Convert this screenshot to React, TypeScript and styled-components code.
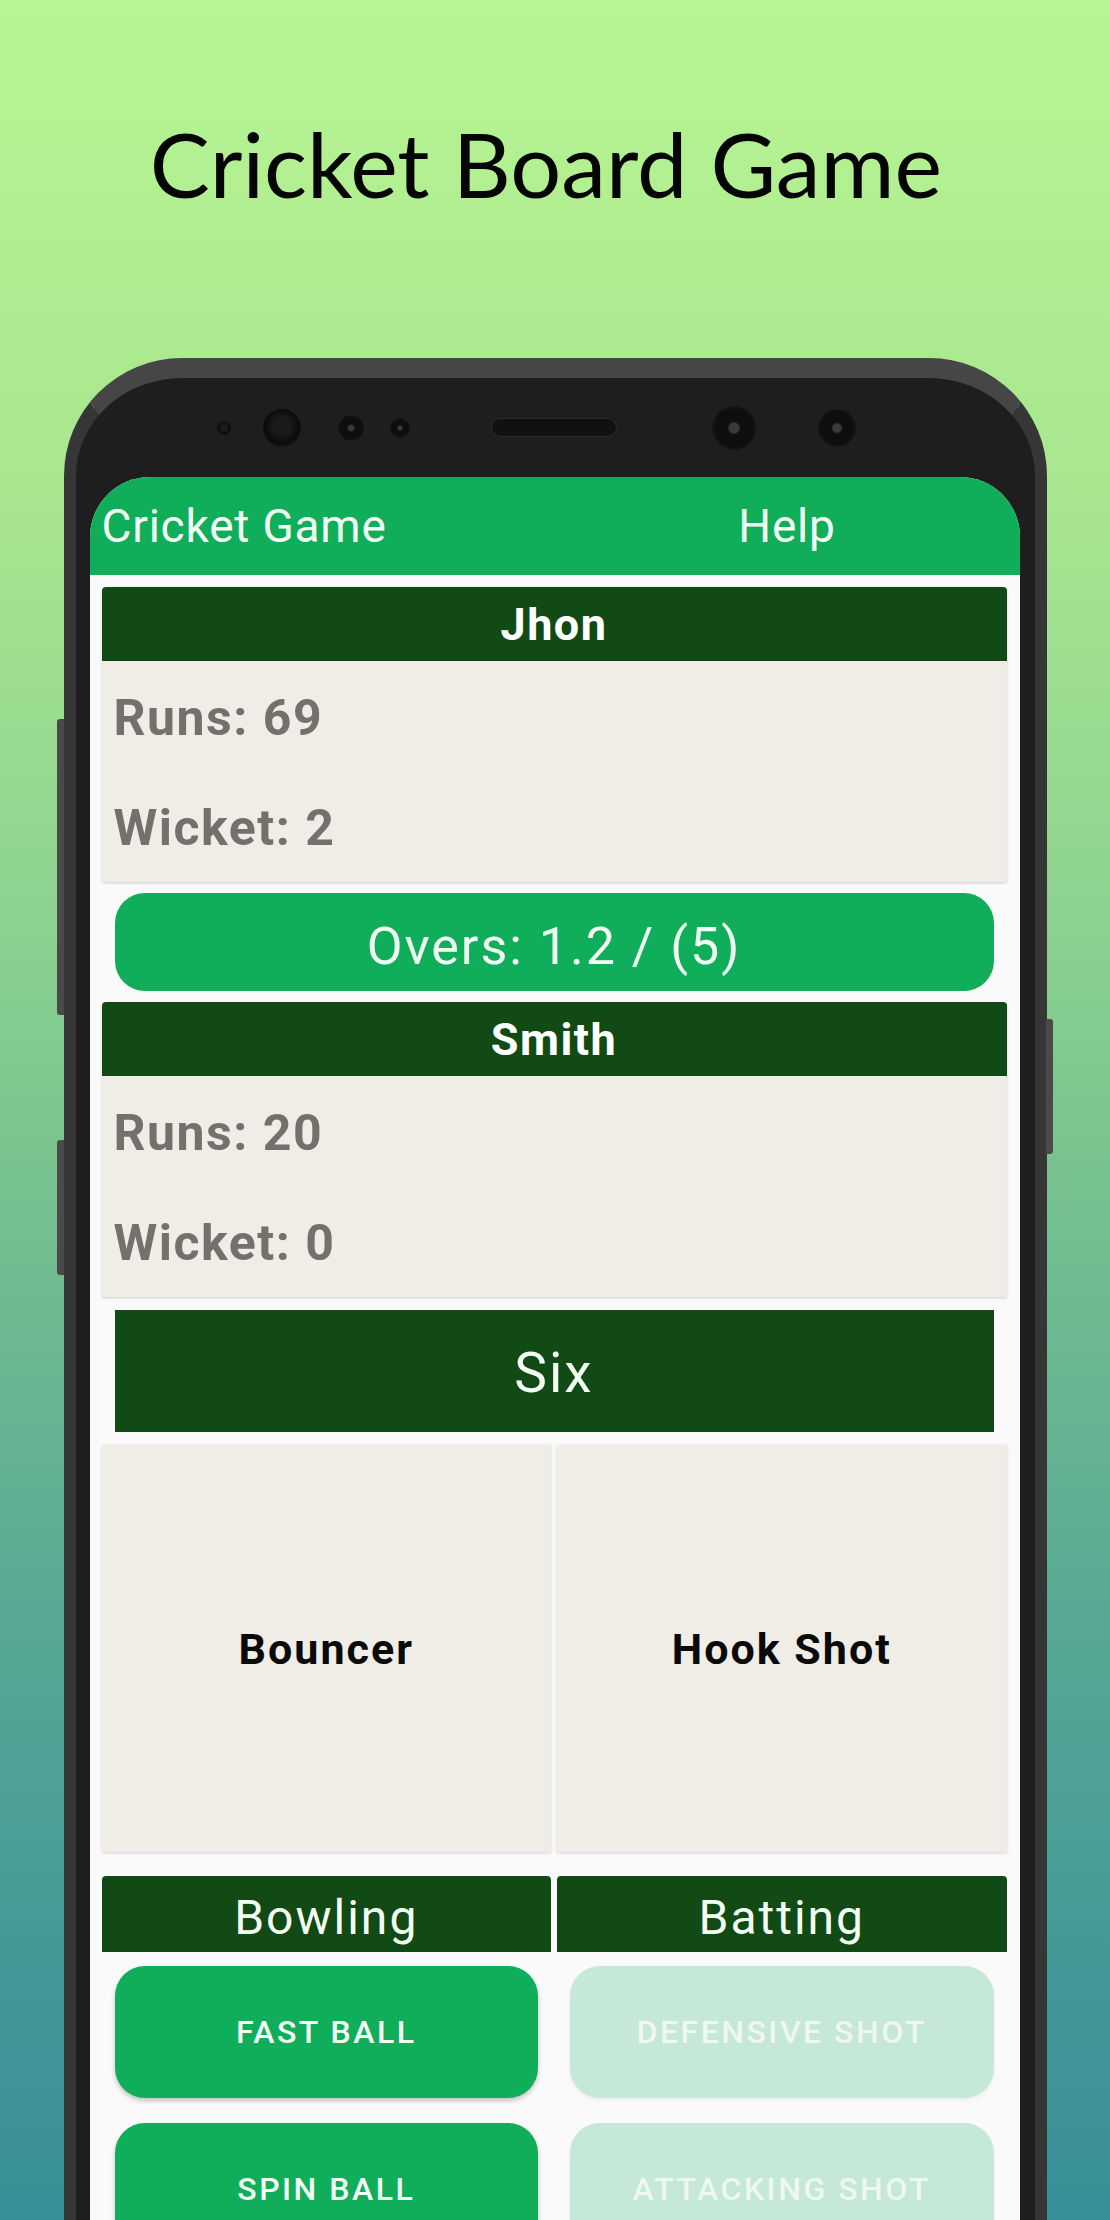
import React from "react";
import styled, { createGlobalStyle } from "styled-components";

const GlobalStyle = createGlobalStyle`
  html, body { margin: 0; padding: 0; }
  body {
    width: 1110px;
    height: 2220px;
    overflow: hidden;
    font-family: Roboto, "Noto Sans", Arial, sans-serif;
  }
  #root { height: 2220px; }
`;

const Page = styled.div`
  height: 2220px;
  overflow: hidden;
  display: flex;
  flex-direction: column;
  align-items: center;
  background: linear-gradient(
    180deg,
    #b7f592 0%,
    #a8e690 22%,
    #8ed38f 40%,
    #6fbb90 58%,
    #55a794 74%,
    #449a96 87%,
    #398f98 100%
  );
`;

const Title = styled.h1`
  margin: 118px 18px 0 0;
  font-family: Lato, "Open Sans", sans-serif;
  font-weight: 400;
  font-size: 90px;
  line-height: 90px;
  color: #050505;
`;

const Phone = styled.div`
  position: relative;
  box-sizing: border-box;
  flex: 0 0 auto;
  margin-top: 150px;
  width: 983px;
  height: 1900px;
  padding: 0 15px 0 14px;
  background: #1e1e1e;
  border: 12px solid #363636;
  border-top: 20px solid #464646;
  border-bottom: none;
  border-radius: 118px 118px 0 0;
  display: flex;
  flex-direction: column;
`;

const SideKey = styled.span<{ $side: "left" | "right"; $top: number; $h: number }>`
  position: absolute;
  ${(p) => (p.$side === "left" ? "left: -19px;" : "right: -18px;")}
  top: ${(p) => p.$top}px;
  width: 7px;
  height: ${(p) => p.$h}px;
  background: #4a4a4a;
  border-radius: ${(p) => (p.$side === "left" ? "3px 0 0 3px" : "0 3px 3px 0")};
`;

const SensorBar = styled.div`
  height: 99px;
  display: flex;
  align-items: center;
`;

const Sensor = styled.span<{ $size: number; $ml: number; $lens?: boolean }>`
  flex: 0 0 auto;
  width: ${(p) => p.$size}px;
  height: ${(p) => p.$size}px;
  margin-left: ${(p) => p.$ml}px;
  border-radius: 50%;
  background: ${(p) =>
    p.$lens
      ? "radial-gradient(circle, #3a3a3a 0 14%, #0e0e0e 22% 60%, #141414 68%, #262626 100%)"
      : "radial-gradient(circle at 50% 45%, #1a1a1a 0 30%, #0b0b0b 60%, #232323 100%)"};
`;

const Speaker = styled.span<{ $ml: number }>`
  flex: 0 0 auto;
  margin-left: ${(p) => p.$ml}px;
  width: 124px;
  height: 17px;
  border-radius: 9px;
  background: #111;
  box-shadow: 0 0 0 1px #2a2a2a;
`;

const Screen = styled.div`
  flex: 1 1 auto;
  background: #fafafa;
  border-radius: 60px 60px 0 0;
  overflow: hidden;
  display: flex;
  flex-direction: column;
`;

const AppBar = styled.header`
  height: 98px;
  flex: 0 0 auto;
  background: #10ae5a;
  display: grid;
  grid-template-columns: 1fr 1fr;
  align-items: center;
  color: #f2fff3;
  font-size: 46px;
  letter-spacing: 0.8px;
`;

const AppTitle = styled.span`
  padding-left: 12px;
`;

const AppAction = styled.span`
  text-align: center;
`;

const Content = styled.main`
  padding: 0 13px 0 12px;
  display: flex;
  flex-direction: column;
`;

const Card = styled.section<{ $mt: number }>`
  margin-top: ${(p) => p.$mt}px;
  border-radius: 4px 4px 2px 2px;
  overflow: hidden;
  background: #f0ece6;
  box-shadow: 0 1px 3px rgba(0, 0, 0, 0.18);
`;

const CardHeader = styled.div`
  height: 74px;
  background: #114a15;
  color: #ffffff;
  font-weight: 700;
  font-size: 45px;
  letter-spacing: 1.5px;
  display: flex;
  align-items: center;
  justify-content: center;
`;

const CardBody = styled.div`
  height: 221px;
  box-sizing: border-box;
  padding-top: 2px;
`;

const Stat = styled.div`
  height: 110px;
  display: flex;
  align-items: center;
  padding-left: 12px;
  font-weight: 700;
  font-size: 50px;
  letter-spacing: 1.5px;
  color: #74706d;
`;

const Overs = styled.div`
  margin: 11px 13px 0;
  height: 98px;
  box-sizing: border-box;
  padding-top: 8px;
  border-radius: 30px;
  background: #10ae5a;
  color: #f0fff2;
  font-size: 52px;
  letter-spacing: 2px;
  display: flex;
  align-items: center;
  justify-content: center;
`;

const Result = styled.div`
  margin: 13px 13px 0;
  height: 122px;
  box-sizing: border-box;
  padding-top: 4px;
  background: #114a15;
  color: #f4fff4;
  font-size: 55px;
  letter-spacing: 2px;
  display: flex;
  align-items: center;
  justify-content: center;
`;

const TwoCols = styled.div<{ $mt: number; $rowGap?: number }>`
  margin-top: ${(p) => p.$mt}px;
  display: grid;
  grid-template-columns: 1fr 1fr;
  column-gap: 6px;
  row-gap: ${(p) => p.$rowGap ?? 0}px;
`;

const PlayCell = styled.div`
  height: 407px;
  background: #f0ece6;
  box-shadow: 0 1px 3px rgba(0, 0, 0, 0.16);
  display: flex;
  align-items: center;
  justify-content: center;
  font-weight: 700;
  font-size: 43px;
  letter-spacing: 2px;
  color: #0a0a0a;
`;

const ColHeader = styled.div`
  height: 76px;
  box-sizing: border-box;
  padding-top: 7px;
  border-radius: 4px 4px 0 0;
  background: #114a15;
  color: #f4fff4;
  font-size: 48px;
  letter-spacing: 2px;
  display: flex;
  align-items: center;
  justify-content: center;
`;

const ButtonSlot = styled.div`
  padding: 0 13px;
`;

const ActionButton = styled.button<{ $disabled?: boolean }>`
  width: 100%;
  height: 132px;
  border: none;
  border-radius: 30px;
  font-family: Roboto, "Noto Sans", Arial, sans-serif;
  font-weight: 500;
  font-size: 32px;
  letter-spacing: 2.5px;
  text-transform: uppercase;
  background: ${(p) => (p.$disabled ? "#c6e8d7" : "#10ae5a")};
  color: ${(p) => (p.$disabled ? "#eef7f0" : "#f4fff5")};
  box-shadow: ${(p) =>
    p.$disabled ? "0 2px 4px rgba(0, 0, 0, 0.06)" : "0 3px 5px rgba(0, 0, 0, 0.22)"};
  cursor: pointer;
`;

type Player = { name: string; runs: number; wickets: number };

const PlayerCard: React.FC<{ player: Player; mt: number }> = ({ player, mt }) => (
  <Card $mt={mt}>
    <CardHeader>{player.name}</CardHeader>
    <CardBody>
      <Stat>Runs: {player.runs}</Stat>
      <Stat>Wicket: {player.wickets}</Stat>
    </CardBody>
  </Card>
);

export default function App() {
  return (
    <Page>
      <GlobalStyle />
      <Title>Cricket Board Game</Title>
      <Phone>
        <SideKey $side="left" $top={341} $h={296} />
        <SideKey $side="left" $top={762} $h={135} />
        <SideKey $side="right" $top={641} $h={135} />
        <SensorBar>
          <Sensor $size={14} $ml={127} />
          <Sensor $size={38} $ml={32} />
          <Sensor $size={26} $ml={37} $lens />
          <Sensor $size={20} $ml={26} $lens />
          <Speaker $ml={82} />
          <Sensor $size={44} $ml={96} $lens />
          <Sensor $size={38} $ml={62} $lens />
        </SensorBar>
        <Screen>
          <AppBar>
            <AppTitle>Cricket Game</AppTitle>
            <AppAction>Help</AppAction>
          </AppBar>
          <Content>
            <PlayerCard player={{ name: "Jhon", runs: 69, wickets: 2 }} mt={12} />
            <Overs>Overs: 1.2 / (5)</Overs>
            <PlayerCard player={{ name: "Smith", runs: 20, wickets: 0 }} mt={11} />
            <Result>Six</Result>
            <TwoCols $mt={13}>
              <PlayCell>Bouncer</PlayCell>
              <PlayCell>Hook Shot</PlayCell>
            </TwoCols>
            <TwoCols $mt={24}>
              <ColHeader>Bowling</ColHeader>
              <ColHeader>Batting</ColHeader>
            </TwoCols>
            <TwoCols $mt={14} $rowGap={25}>
              <ButtonSlot>
                <ActionButton>Fast Ball</ActionButton>
              </ButtonSlot>
              <ButtonSlot>
                <ActionButton $disabled disabled>
                  Defensive Shot
                </ActionButton>
              </ButtonSlot>
              <ButtonSlot>
                <ActionButton>Spin Ball</ActionButton>
              </ButtonSlot>
              <ButtonSlot>
                <ActionButton $disabled disabled>
                  Attacking Shot
                </ActionButton>
              </ButtonSlot>
            </TwoCols>
          </Content>
        </Screen>
      </Phone>
    </Page>
  );
}
